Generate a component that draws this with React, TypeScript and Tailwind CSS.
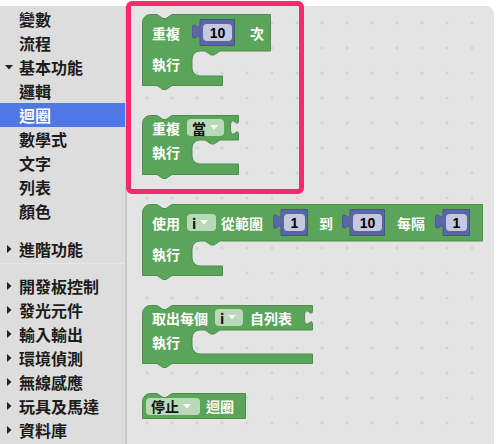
const GREEN = '#5ba55b';
const GREEN_EDGE = '#4b8f4b';
const MATH = '#5b67a5';
const MATH_EDGE = '#4a5590';

const categories = [
  { label: '變數' },
  { label: '流程' },
  { label: '基本功能', open: true },
  { label: '邏輯' },
  { label: '迴圈', selected: true },
  { label: '數學式' },
  { label: '文字' },
  { label: '列表' },
  { label: '顏色' },
];

const extraCategories = ['開發板控制', '發光元件', '輸入輸出', '環境偵測', '無線感應', '玩具及馬達', '資料庫'];

function RightArrow() {
  return (
    <svg width="5" height="8" viewBox="0 0 5 8" className="ml-[7px]">
      <path d="M0,0 L4.5,4 L0,8 Z" fill="#222" />
    </svg>
  );
}

function DownArrow() {
  return (
    <svg width="8" height="5" viewBox="0 0 8 5" className="ml-[5px]">
      <path d="M0,0 L8,0 L4,4.5 Z" fill="#222" />
    </svg>
  );
}

function CategoryRow({ label, open, selected, arrow }: { label: string; open?: boolean; selected?: boolean; arrow?: boolean }) {
  return (
    <div className={`h-[24px] flex items-center ${selected ? 'bg-[#4f77e6] text-white' : 'text-[#1c1c1c]'}`}>
      <div className="w-[19px] flex items-center">
        {open ? <DownArrow /> : arrow ? <RightArrow /> : null}
      </div>
      <span className="leading-none">{label}</span>
    </div>
  );
}

// geras style C shaped block outline
function cPath(w: number, topH: number, mouthH: number, botH: number, botW: number, socket: boolean) {
  const L = 50;
  let d = `M0.5,8.5 A8,8 0 0,1 8.5,0.5 H15 l6,4 3,0 6,-4 H${w - 0.5}`;
  if (socket) d += ` V5 c0,10 -8,-8 -8,7.5 s8,-2.5 8,7.5`;
  d += ` V${topH} H${L + 28} l-6,4 -3,0 -6,-4 H${L + 8} a8,8 0 0,0 -8,8 V${topH + mouthH - 8} a8,8 0 0,0 8,8 H${botW - 0.5}`;
  d += ` V${topH + mouthH + botH - 0.5} H30 l-6,4 -3,0 -6,-4 H0.5 Z`;
  return d;
}

function Dropdown({ label, className }: { label: string; className: string }) {
  return (
    <div className={`h-[17px] rounded-[4px] bg-[#b9d9b9] flex items-center pl-[5px] gap-[4px] shrink-0 ${className}`}>
      <span className="text-[14px] leading-none font-bold text-[#111]">{label}</span>
      <svg width="8" height="5" viewBox="0 0 8 5">
        <path d="M0,0 L8,0 L4,4.5 Z" fill="#ffffff" fillOpacity="0.9" />
      </svg>
    </div>
  );
}

function NumberBlock({ value, w, className }: { value: string; w: number; className: string }) {
  const d = `M8,0.5 H${w - 0.5} V26.5 H8 V20 c0,-10 -8,8 -8,-7.5 s8,2.5 8,-7.5 Z`;
  return (
    <div className={`relative h-[27px] shrink-0 ${className}`}>
      <svg className="absolute left-0 top-0" width={w} height={27}>
        <path d={d} fill={MATH} stroke={MATH_EDGE} strokeWidth="1" />
      </svg>
      <div className="relative h-full flex items-center pl-[11px] pr-[3px]">
        <div className="h-[17px] w-full rounded-[4px] bg-[#c4c8e1] flex items-center justify-center text-[14px] leading-none text-black font-['Liberation_Sans',sans-serif]">
          {value}
        </div>
      </div>
    </div>
  );
}

function CBlock({
  w, topH, mouthH, botH, botW, socket = false, sizeClass, topClass, mouthClass, children,
}: {
  w: number; topH: number; mouthH: number; botH: number; botW: number; socket?: boolean;
  sizeClass: string; topClass: string; mouthClass: string; children: React.ReactNode;
}) {
  return (
    <div className={`relative shrink-0 ${sizeClass}`}>
      <svg className="absolute left-0 top-0 overflow-visible" width={w} height={topH + mouthH + botH}>
        <path d={cPath(w, topH, mouthH, botH, botW, socket)} fill={GREEN} stroke={GREEN_EDGE} strokeWidth="1" />
      </svg>
      <div className="relative flex flex-col text-white font-bold text-[14px] leading-none">
        <div className={`flex items-center pl-[10px] ${topClass}`}>{children}</div>
        <div className={`flex items-center pl-[10px] ${mouthClass}`}>執行</div>
      </div>
    </div>
  );
}

function StopBlock() {
  const d = `M0.5,8.5 A8,8 0 0,1 8.5,0.5 H15 l6,4 3,0 6,-4 H103.5 V25.5 H0.5 Z`;
  return (
    <div className="relative shrink-0 w-[104px] h-[26px]">
      <svg className="absolute left-0 top-0" width={104} height={26}>
        <path d={d} fill={GREEN} stroke={GREEN_EDGE} strokeWidth="1" />
      </svg>
      <div className="relative h-full flex items-center pl-[4px] text-white font-bold text-[14px] leading-none">
        <Dropdown label="停止" className="w-[54px]" />
        <span className="ml-[6px]">迴圈</span>
      </div>
    </div>
  );
}

export default function App() {
  return (
    <div className="relative w-[500px] h-[444px] overflow-hidden bg-white pt-[6px] flex font-['Noto_Sans_CJK_TC','Noto_Sans',sans-serif]">
      <aside className="w-[127px] h-full shrink-0 bg-[#dddddd] border-r-2 border-[#c9c9c9] pt-[1px] text-[16px] font-semibold">
        {categories.map((c) => (
          <CategoryRow key={c.label} label={c.label} open={c.open} selected={c.selected} />
        ))}
        <div className="mt-[14px] border-b border-[#e6e6e6] pb-[2px]">
          <CategoryRow label="進階功能" arrow />
        </div>
        <div className="mt-[10px]">
          {extraCategories.map((label) => (
            <CategoryRow key={label} label={label} arrow />
          ))}
        </div>
      </aside>

      <main className="w-[367px] h-full bg-[#e4e4e4] rounded-tr-[8px] bg-[radial-gradient(circle,#cdcdcd_1px,transparent_1.5px)] bg-[length:25px_25px] bg-[position:7.5px_4.5px] flex flex-col gap-[29px] pt-[8px] pl-[15px]">
        <CBlock w={129} topH={37} mouthH={25} botH={10} botW={81} sizeClass="w-[129px] h-[72px]" topClass="h-[37px]" mouthClass="h-[25px]">
          <span>重複</span>
          <NumberBlock value="10" w={43} className="w-[43px] ml-[12px]" />
          <span className="ml-[15px]">次</span>
        </CBlock>

        <CBlock w={97} topH={25} mouthH={24} botH={11} botW={97} socket sizeClass="w-[97px] h-[60px]" topClass="h-[25px]" mouthClass="h-[24px]">
          <span>重複</span>
          <Dropdown label="當" className="w-[37px] ml-[7px]" />
        </CBlock>

        <CBlock w={341} topH={37} mouthH={25} botH={10} botW={81} sizeClass="w-[341px] h-[72px]" topClass="h-[37px]" mouthClass="h-[25px]">
          <span>使用</span>
          <Dropdown label="i" className="w-[29px] ml-[7px]" />
          <span className="ml-[5px]">從範圍</span>
          <NumberBlock value="1" w={35} className="w-[35px] ml-[10px]" />
          <span className="ml-[11px]">到</span>
          <NumberBlock value="10" w={43} className="w-[43px] ml-[9px]" />
          <span className="ml-[12px]">每隔</span>
          <NumberBlock value="1" w={35} className="w-[35px] ml-[10px]" />
        </CBlock>

        <CBlock w={171} topH={25} mouthH={24} botH={10} botW={171} socket sizeClass="w-[171px] h-[59px]" topClass="h-[25px]" mouthClass="h-[24px]">
          <span>取出每個</span>
          <Dropdown label="i" className="w-[28px] ml-[7px]" />
          <span className="ml-[7px]">自列表</span>
        </CBlock>

        <StopBlock />
      </main>

      <div className="absolute left-[126px] top-[1px] w-[178px] h-[193px] border-[5px] border-[#f52a6b] rounded-[6px] pointer-events-none" />
    </div>
  );
}
